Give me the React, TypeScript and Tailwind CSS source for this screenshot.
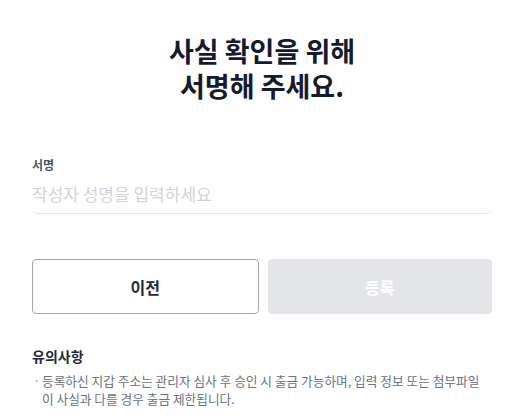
import React from "react";

const font = { fontFamily: '"Noto Sans CJK KR", "Noto Sans", sans-serif' };

export default function App() {
  return (
    <div className="min-h-screen bg-white" style={font}>
      <div className="ml-[32px] w-[460px] pt-[37px]">
        <h1 className="flex flex-col items-center gap-[8px] text-[27px] font-bold leading-[27px] text-[#151a2d]">
          <span>사실 확인을 위해</span>
          <span>서명해 주세요.</span>
        </h1>

        <div className="mt-[58px]">
          <label className="block text-[12px] font-semibold leading-[16px] text-[#4b5563]">서명</label>
          <input
            className="mt-[9px] w-full rounded-[6px] border-b border-[#e5e7eb] pb-[7px] text-[17px] leading-[24px] text-gray-800 outline-none placeholder:text-[#d1d5db]"
            placeholder="작성자 성명을 입력하세요"
          />
        </div>

        <div className="mt-[45px] flex gap-[9px]">
          <button className="h-[55px] flex-1 rounded-[4px] border border-[#a3a6ad] bg-white text-[16px] font-bold text-[#1f2937]">
            이전
          </button>
          <button className="h-[55px] flex-1 rounded-[4px] bg-[#e4e5e9] text-[16px] font-bold text-white">
            등록
          </button>
        </div>

        <div className="mt-[33px]">
          <p className="text-[14px] font-bold leading-[18px] text-[#1f2937]">유의사항</p>
          <div className="mt-[7px] flex text-[12.7px] leading-[18px] text-[#6b7280]">
            <span className="w-[10px] shrink-0 pl-[1px] text-[#9ca3af]">·</span>
            <p className="whitespace-nowrap">
              등록하신 지갑 주소는 관리자 심사 후 승인 시 출금 가능하며, 입력 정보 또는 첨부파일
              <br />
              이 사실과 다를 경우 출금 제한됩니다.
            </p>
          </div>
        </div>
      </div>
    </div>
  );
}
